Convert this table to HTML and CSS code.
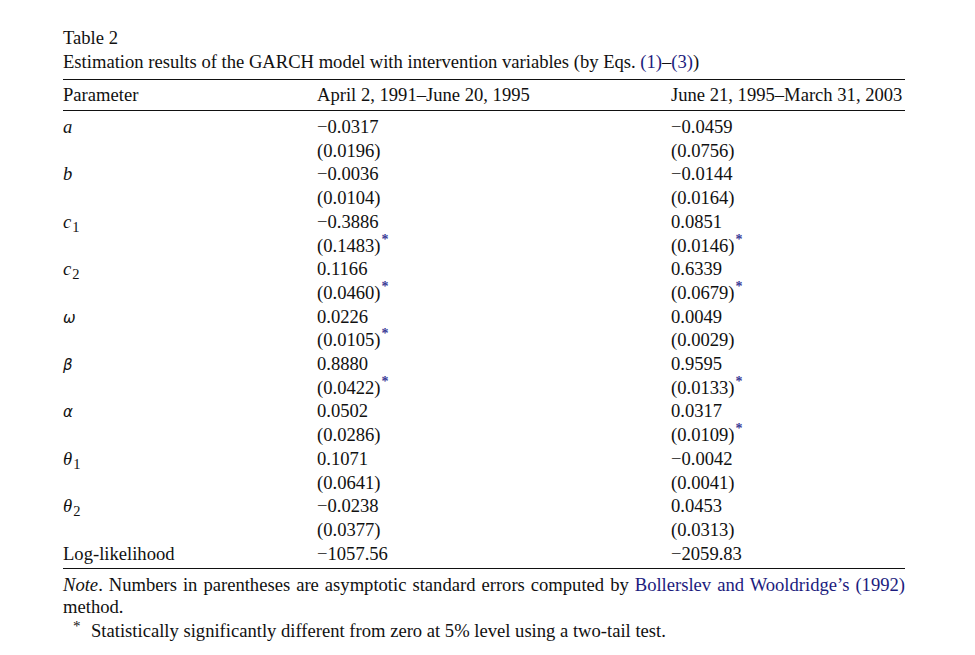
FILE: index.html
```html
<!DOCTYPE html>
<html>
<head>
<meta charset="utf-8">
<link rel="stylesheet" href="styles.css">
</head>
<body>
<div class="wrap">
  <div class="caption">
    <div class="line">Table 2</div>
    <div class="line">Estimation results of the GARCH model with intervention variables (by Eqs. <a class="ref">(1)</a>–<a class="ref">(3)</a>)</div>
  </div>
  <table class="tbl">
    <thead>
      <tr><th class="c1">Parameter</th><th class="c2">April 2, 1991–June 20, 1995</th><th class="c3">June 21, 1995–March 31, 2003</th></tr>
    </thead>
    <tbody>
      <tr class="first"><td><i>a</i></td><td>−0.0317</td><td>−0.0459</td></tr>
      <tr><td></td><td>(0.0196)</td><td>(0.0756)</td></tr>
      <tr><td><i>b</i></td><td>−0.0036</td><td>−0.0144</td></tr>
      <tr><td></td><td>(0.0104)</td><td>(0.0164)</td></tr>
      <tr><td><i>c</i><span class="sub">1</span></td><td>−0.3886</td><td>0.0851</td></tr>
      <tr><td></td><td>(0.1483)<span class="star">*</span></td><td>(0.0146)<span class="star">*</span></td></tr>
      <tr><td><i>c</i><span class="sub">2</span></td><td>0.1166</td><td>0.6339</td></tr>
      <tr><td></td><td>(0.0460)<span class="star">*</span></td><td>(0.0679)<span class="star">*</span></td></tr>
      <tr><td><i class="greek">ω</i></td><td>0.0226</td><td>0.0049</td></tr>
      <tr><td></td><td>(0.0105)<span class="star">*</span></td><td>(0.0029)</td></tr>
      <tr><td><i class="greek">β</i></td><td>0.8880</td><td>0.9595</td></tr>
      <tr><td></td><td>(0.0422)<span class="star">*</span></td><td>(0.0133)<span class="star">*</span></td></tr>
      <tr><td><i class="greek">α</i></td><td>0.0502</td><td>0.0317</td></tr>
      <tr><td></td><td>(0.0286)</td><td>(0.0109)<span class="star">*</span></td></tr>
      <tr><td><i>θ</i><span class="sub">1</span></td><td>0.1071</td><td>−0.0042</td></tr>
      <tr><td></td><td>(0.0641)</td><td>(0.0041)</td></tr>
      <tr><td><i>θ</i><span class="sub">2</span></td><td>−0.0238</td><td>0.0453</td></tr>
      <tr><td></td><td>(0.0377)</td><td>(0.0313)</td></tr>
      <tr class="last"><td>Log-likelihood</td><td>−1057.56</td><td>−2059.83</td></tr>
    </tbody>
  </table>
  <div class="notes">
    <p class="note"><i>Note</i>. Numbers in parentheses are asymptotic standard errors computed by <a class="ref">Bollerslev and Wooldridge’s (1992)</a> method.</p>
    <p class="foot"><span class="fstar">*</span><span>Statistically significantly different from zero at 5% level using a two-tail test.</span></p>
  </div>
</div>
</body>
</html>
```

FILE: styles.css
```css
html, body {
  margin: 0;
  padding: 0;
  background: #ffffff;
}
body {
  font-family: "Liberation Serif", "Times New Roman", serif;
  font-size: 18.6px;
  color: #111111;
}
.wrap {
  width: 842px;
  margin: 26px 0 0 63px;
}
.caption .line {
  line-height: 24px;
  white-space: nowrap;
}
.ref {
  color: #1c1c7e;
  text-decoration: none;
}
.tbl {
  width: 100%;
  border-collapse: collapse;
  margin-top: 5px;
  border-top: 1.4px solid #111;
  border-bottom: 1.4px solid #111;
}
.tbl th {
  font-weight: normal;
  text-align: left;
  line-height: 24px;
  padding: 3px 0 3px 0;
  border-bottom: 1.4px solid #111;
  white-space: nowrap;
}
.tbl th.c1 { width: 254px; }
.tbl th.c2 { width: 354px; }
.tbl td {
  padding: 0;
  line-height: 23.7px;
  height: 23.7px;
  white-space: nowrap;
  vertical-align: top;
}
.tbl tr.first td { padding-top: 4px; }
.tbl tr.last td { padding-bottom: 3px; }
.sub {
  font-size: 14.5px;
  line-height: 0;
  position: relative;
  top: 4px;
  margin-left: 1px;
}
.greek {
  font-family: "DejaVu Sans", sans-serif;
  font-size: 15px;
  line-height: 0;
}
.star {
  color: #3a3a96;
  font-size: 14px;
  font-weight: bold;
  line-height: 0;
  position: relative;
  top: -8px;
  margin-left: 1px;
}
.notes {
  margin-top: 5px;
}
.note {
  margin: 0;
  line-height: 22px;
  text-align: justify;
}
.foot {
  margin: 2px 0 0 0;
  line-height: 22px;
  display: flex;
}
.fstar {
  font-size: 15px;
  width: 28px;
  padding-left: 10px;
  box-sizing: border-box;
  position: relative;
  top: -5px;
}
```
